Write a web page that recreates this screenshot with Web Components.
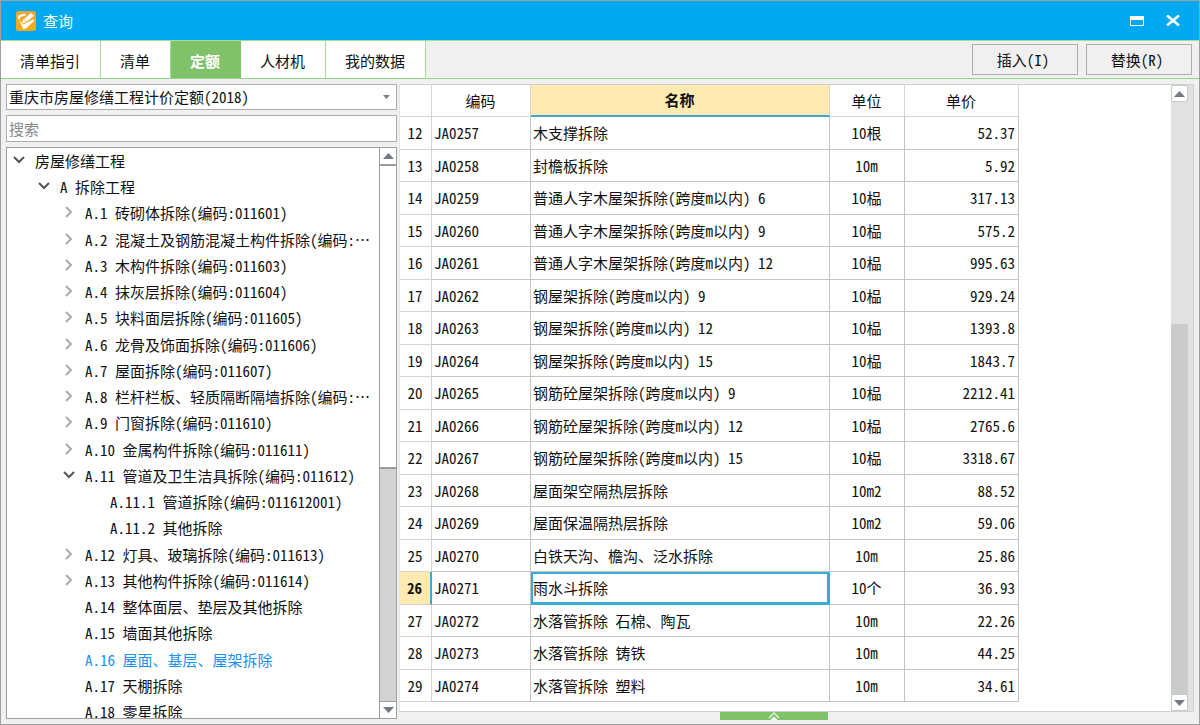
<!DOCTYPE html>
<html lang="zh-CN">
<head>
<meta charset="utf-8">
<title>查询</title>
<style>
  html, body { height: 100%; margin: 0; }
  body { font: 15px/20px "Noto Sans Mono CJK SC", "Noto Sans CJK SC", monospace; color: #111; }
</style>
</head>
<body>
<query-window></query-window>

<template id="t-window">
  <style>
    :host { display: flex; flex-direction: column; box-sizing: border-box; height: 100vh; min-height: 480px; border: 1px solid #a0a0a0; background: #f0f0f0; overflow: hidden; }
    .toolbar { display: flex; align-items: center; height: 37px; border-top: 1px solid #a5dc9a; border-bottom: 1px solid #96d48a; flex: none; }
    .actions { display: flex; gap: 8px; margin-left: auto; padding-right: 7px; }
    .actions button { box-sizing: border-box; width: 106px; height: 31px; padding: 0 4px 0 0; border: 1px solid #adadad; background: #f0f0f0; font: inherit; color: inherit; }
    main { flex: 1; min-height: 0; display: flex; gap: 2px; padding: 5px 5px 0 5px; }
    .side { flex: none; width: 391px; display: flex; flex-direction: column; gap: 5px; padding-bottom: 5px; }
    .content { flex: 1; min-width: 0; display: flex; flex-direction: column; }
    price-grid { flex: 1; min-height: 0; }
    .splitter { flex: none; display: grid; grid-template-columns: 7fr 108px 8fr; height: 12px; }
    .splitter button { grid-column: 2; height: 8px; padding: 0; border: 0; background: #80c269; display: flex; justify-content: center; align-items: flex-end; }
    .splitter svg { display: block; }
  </style>
  <title-bar>查询</title-bar>
  <div class="toolbar">
    <tab-strip>
      <tab-item>清单指引</tab-item><tab-item>清单</tab-item><tab-item active>定额</tab-item><tab-item>人材机</tab-item><tab-item>我的数据</tab-item>
    </tab-strip>
    <div class="actions"><button type="button">插入(I)</button><button type="button">替换(R)</button></div>
  </div>
  <main>
    <div class="side">
      <quota-filter></quota-filter>
      <chapter-tree></chapter-tree>
    </div>
    <div class="content">
      <price-grid></price-grid>
      <div class="splitter"><button type="button" aria-label="展开">
        <svg width="12" height="8" viewBox="0 0 12 8"><path d="M1 6l5-5 5 5" fill="none" stroke="#e4f5dd" stroke-width="1.300"/><path d="M2.500 8L6 4.500 9.500 8z" fill="#fff"/></svg>
      </button></div>
    </div>
  </main>
</template>

<template id="t-title">
  <style>
    :host { display: flex; align-items: center; height: 39px; flex: none; padding: 0 17px 0 15px; background: #02a9f1; color: #fff; }
    h1 { margin: 0 0 0 7px; font: inherit; }
    .ctl { margin-left: auto; display: flex; gap: 18px; }
    button { width: 18px; height: 18px; padding: 0; border: 0; background: none; display: flex; align-items: center; justify-content: center; }
    svg { display: block; }
  </style>
  <svg width="20" height="20" viewBox="0 0 20 20" aria-hidden="true">
    <defs><linearGradient id="g" x2="0" y2="1"><stop stop-color="#e8a63c"/><stop offset="1" stop-color="#fbac10"/></linearGradient></defs>
    <rect width="20" height="20" rx="3" fill="url(#g)"/>
    <path d="M9.500 3.500L4 5Q2 6 3.500 8" fill="none" stroke="#fff" stroke-width="2"/>
    <path d="M15 2l3 2.500-8 7.500-4 .5 1-3.500z" fill="#fff"/>
    <path d="M3 8l3.500 5 1.500 0L17 8.500 18 10l-8 7.500-3 .5z" fill="#fff"/>
    <path d="M8 8.500l2.500 2.500M7 13l9-5.500" stroke="#f0a62c" stroke-width=".800"/>
  </svg>
  <h1><slot></slot></h1>
  <div class="ctl">
    <button type="button" aria-label="最大化"><svg width="14" height="10" viewBox="0 0 14 10"><path d="M0 0h14v10H0zM1 4v5h12V4z" fill="#fff" fill-rule="evenodd"/></svg></button>
    <button type="button" aria-label="关闭"><svg width="14" height="11" viewBox="0 0 14 11"><path d="M1 .5l12 10M13 .5l-12 10" stroke="#fff" stroke-width="2.600"/></svg></button>
  </div>
</template>

<template id="t-tabs">
  <style>:host { display: flex; align-self: stretch; }</style>
  <slot></slot>
</template>

<template id="t-tab">
  <style>
    :host { display: flex; background: #fff; border-right: 1px solid #a5dc9a; }
    button { padding: 2px 20px 0 19px; border: 0; background: none; font: inherit; color: inherit; }
    :host([active]) { background: #80c269; color: #fff; font-weight: bold; border-color: #80c269; }
  </style>
  <button type="button"><slot></slot></button>
</template>

<template id="t-filter">
  <style>
    :host { display: flex; flex-direction: column; gap: 5px; }
    label { display: grid; align-items: center; }
    select, input { grid-area: 1 / 1; box-sizing: border-box; width: 100%; height: 27px; margin: 0; padding: 0 2px; border: 1px solid #adadad; border-radius: 0; background: #fff; font: inherit; color: inherit; appearance: none; outline: 0; }
    select { height: 26px; }
    input::placeholder { color: #888; opacity: 1; }
    svg { grid-area: 1 / 1; justify-self: end; margin-right: 7px; pointer-events: none; }
  </style>
  <label><select aria-label="定额库"><option>重庆市房屋修缮工程计价定额(2018)</option></select>
    <svg width="7" height="4" viewBox="0 0 7 4"><path d="M0 0h7L3.500 4z" fill="#777c88"/></svg></label>
  <label><input type="text" placeholder="搜索" aria-label="搜索"></label>
</template>

<template id="t-bar">
  <style>
    :host { display: flex; flex-direction: column; flex: none; box-sizing: border-box; }
    button { flex: none; height: 17px; padding: 0; background: #fff; display: flex; align-items: center; justify-content: center; box-sizing: border-box; }
    .before { flex: var(--before, 0) 0 0; }
    .thumb { flex: var(--thumb, 1) 0 0; box-sizing: border-box; }
    .after { flex: var(--after, 0) 0 0; }
    :host([kind=classic]) { width: 17px; background: #d2d2d2; border-left: 1px solid #9c9ca0; }
    :host([kind=classic]) button { border: 0; }
    :host([kind=classic]) .up { border-bottom: 1px solid #9c9ca0; }
    :host([kind=classic]) .down { border-top: 1px solid #9c9ca0; }
    :host([kind=classic]) .thumb { background: #fff; border-top: 1px solid #9c9ca0; border-bottom: 2px solid #9c9ca0; }
    :host([kind=soft]) { width: 22px; padding-right: 5px; background: #e1e1e1; }
    :host([kind=soft]) button { border: 1px solid #c8c8c8; border-radius: 2px; }
    :host([kind=soft]) .thumb { background: #cbcbcb; border-radius: 2px 2px 0 0; }
  </style>
  <button class="up" type="button" aria-label="向上"><svg width="11" height="6" viewBox="0 0 11 6"><path d="M0 6h11L5.500 0z" fill="#747884"/></svg></button>
  <div class="before"></div><div class="thumb"></div><div class="after"></div>
  <button class="down" type="button" aria-label="向下"><svg width="11" height="6" viewBox="0 0 11 6"><path d="M0 0h11L5.500 6z" fill="#747884"/></svg></button>
</template>

<template id="t-tree">
  <style>
    :host { flex: 1; min-height: 0; display: flex; box-sizing: border-box; border: 1px solid #9aa0a8; background: #fff; }
    ul { flex: 1; min-width: 0; margin: 0; padding: 0; list-style: none; overflow: hidden; }
    tree-row:nth-child(4n) { height: 27px; }
    scroll-bar { --before: 0; --thumb: 303; --after: 234; }
  </style>
  <ul role="tree"></ul>
  <scroll-bar kind="classic"></scroll-bar>
</template>

<template id="t-row">
  <style>
    :host { display: flex; align-items: center; height: 26px; white-space: nowrap; padding-left: calc(3px + var(--level) * 25px); }
    svg { width: 18px; height: 18px; margin-right: 7px; flex: none; }
    path { fill: none; stroke: #aaa; stroke-width: 2; visibility: hidden; }
    :host([state=closed]) .closed, :host([state=open]) .open { visibility: visible; }
    .open { stroke: #555; }
    :host([selected]) { color: #1a93f5; }
  </style>
  <svg viewBox="0 0 18 18" aria-hidden="true"><path class="open" d="M4 5l5 5 5-5"/><path class="closed" d="M6 3l5 5-5 5"/></svg><slot></slot>
</template>

<template id="t-grid">
  <style>
    :host { display: flex; box-sizing: border-box; background: #fff; border: solid #d0d0d0; border-width: 1px; border-left-color: #e4e4e4; }
    .view { flex: 1; min-width: 0; overflow: hidden; }
    table { table-layout: fixed; width: 619px; border-collapse: separate; border-spacing: 0; }
    .c-no { width: 32px; } .c-code { width: 99px; } .c-name { width: 299px; } .c-unit { width: 75px; } .c-price { width: 114px; }
    th, td { box-sizing: border-box; height: 32px; padding: 0 3px 0 2px; border: solid #c4c4c4; border-width: 0 1px 1px 0; font-weight: normal; text-align: left; white-space: nowrap; overflow: hidden; }
    tbody tr:nth-child(odd) > * { height: 33px; }
    th, td.unit { text-align: center; }
    tbody th, thead th { border-color: #d4d4d4; }
    td.price { text-align: right; }
    thead .current { background: #ffebb2; font-weight: bold; border-bottom: 2px solid #3da9d5; }
    tr.current th { background: #ffebb2; font-weight: bold; border-right: 2px solid #3da9d5; }
    tr.current .name { box-shadow: inset 0 0 0 1px #3da9d5, inset 0 0 0 2px #3da9d5; border-color: #3da9d5; }
    scroll-bar { --before: 222; --thumb: 370; --after: 0; }
  </style>
  <div class="view">
    <table>
      <colgroup><col class="c-no"><col class="c-code"><col class="c-name"><col class="c-unit"><col class="c-price"></colgroup>
      <thead><tr><th></th><th scope="col">编码</th><th scope="col" class="current">名称</th><th scope="col">单位</th><th scope="col">单价</th></tr></thead>
      <tbody></tbody>
    </table>
  </div>
  <scroll-bar kind="soft"></scroll-bar>
</template>

<script>
  class Base extends HTMLElement {
    constructor() {
      super();
      this.attachShadow({ mode: 'open' }).append(document.getElementById(this.constructor.template).content.cloneNode(true));
    }
  }
  const define = (name, template) => customElements.define(name, class extends Base { static template = template; });

  const chapters = [
    [1, 'open', '房屋修缮工程'],
    [2, 'open', 'A 拆除工程'],
    [3, 'closed', 'A.1 砖砌体拆除(编码:011601)'],
    [3, 'closed', 'A.2 混凝土及钢筋混凝土构件拆除(编码:…'],
    [3, 'closed', 'A.3 木构件拆除(编码:011603)'],
    [3, 'closed', 'A.4 抹灰层拆除(编码:011604)'],
    [3, 'closed', 'A.5 块料面层拆除(编码:011605)'],
    [3, 'closed', 'A.6 龙骨及饰面拆除(编码:011606)'],
    [3, 'closed', 'A.7 屋面拆除(编码:011607)'],
    [3, 'closed', 'A.8 栏杆栏板、轻质隔断隔墙拆除(编码:…'],
    [3, 'closed', 'A.9 门窗拆除(编码:011610)'],
    [3, 'closed', 'A.10 金属构件拆除(编码:011611)'],
    [3, 'open', 'A.11 管道及卫生洁具拆除(编码:011612)'],
    [4, '', 'A.11.1 管道拆除(编码:011612001)'],
    [4, '', 'A.11.2 其他拆除'],
    [3, 'closed', 'A.12 灯具、玻璃拆除(编码:011613)'],
    [3, 'closed', 'A.13 其他构件拆除(编码:011614)'],
    [3, '', 'A.14 整体面层、垫层及其他拆除'],
    [3, '', 'A.15 墙面其他拆除'],
    [3, '', 'A.16 屋面、基层、屋架拆除', true],
    [3, '', 'A.17 天棚拆除'],
    [3, '', 'A.18 零星拆除']
  ];

  const quotas = [
    [12, 'JA0257', '木支撑拆除', '10根', '52.37'],
    [13, 'JA0258', '封檐板拆除', '10m', '5.92'],
    [14, 'JA0259', '普通人字木屋架拆除(跨度m以内) 6', '10榀', '317.13'],
    [15, 'JA0260', '普通人字木屋架拆除(跨度m以内) 9', '10榀', '575.2'],
    [16, 'JA0261', '普通人字木屋架拆除(跨度m以内) 12', '10榀', '995.63'],
    [17, 'JA0262', '钢屋架拆除(跨度m以内) 9', '10榀', '929.24'],
    [18, 'JA0263', '钢屋架拆除(跨度m以内) 12', '10榀', '1393.8'],
    [19, 'JA0264', '钢屋架拆除(跨度m以内) 15', '10榀', '1843.7'],
    [20, 'JA0265', '钢筋砼屋架拆除(跨度m以内) 9', '10榀', '2212.41'],
    [21, 'JA0266', '钢筋砼屋架拆除(跨度m以内) 12', '10榀', '2765.6'],
    [22, 'JA0267', '钢筋砼屋架拆除(跨度m以内) 15', '10榀', '3318.67'],
    [23, 'JA0268', '屋面架空隔热层拆除', '10m2', '88.52'],
    [24, 'JA0269', '屋面保温隔热层拆除', '10m2', '59.06'],
    [25, 'JA0270', '白铁天沟、檐沟、泛水拆除', '10m', '25.86'],
    [26, 'JA0271', '雨水斗拆除', '10个', '36.93'],
    [27, 'JA0272', '水落管拆除 石棉、陶瓦', '10m', '22.26'],
    [28, 'JA0273', '水落管拆除 铸铁', '10m', '44.25'],
    [29, 'JA0274', '水落管拆除 塑料', '10m', '34.61']
  ];
  const currentNo = 26;

  define('title-bar', 't-title');
  define('tab-strip', 't-tabs');
  define('tab-item', 't-tab');
  define('quota-filter', 't-filter');
  define('scroll-bar', 't-bar');

  customElements.define('tree-row', class extends Base {
    static template = 't-row';
    connectedCallback() {
      this.style.setProperty('--level', this.getAttribute('level') - 1);
    }
  });

  customElements.define('chapter-tree', class extends Base {
    static template = 't-tree';
    connectedCallback() {
      this.shadowRoot.querySelector('ul').innerHTML = chapters.map(([level, state, text, selected]) =>
        `<tree-row role="treeitem" level="${level}" aria-level="${level}" state="${state}"${selected ? ' selected' : ''}>${text}</tree-row>`).join('');
    }
  });

  customElements.define('price-grid', class extends Base {
    static template = 't-grid';
    connectedCallback() {
      this.shadowRoot.querySelector('tbody').innerHTML = quotas.map(([no, code, name, unit, price]) =>
        `<tr${no === currentNo ? ' class="current"' : ''}><th scope="row">${no}</th><td>${code}</td><td class="name">${name}</td><td class="unit">${unit}</td><td class="price">${price}</td></tr>`).join('');
    }
  });

  define('query-window', 't-window');
</script>
</body>
</html>
